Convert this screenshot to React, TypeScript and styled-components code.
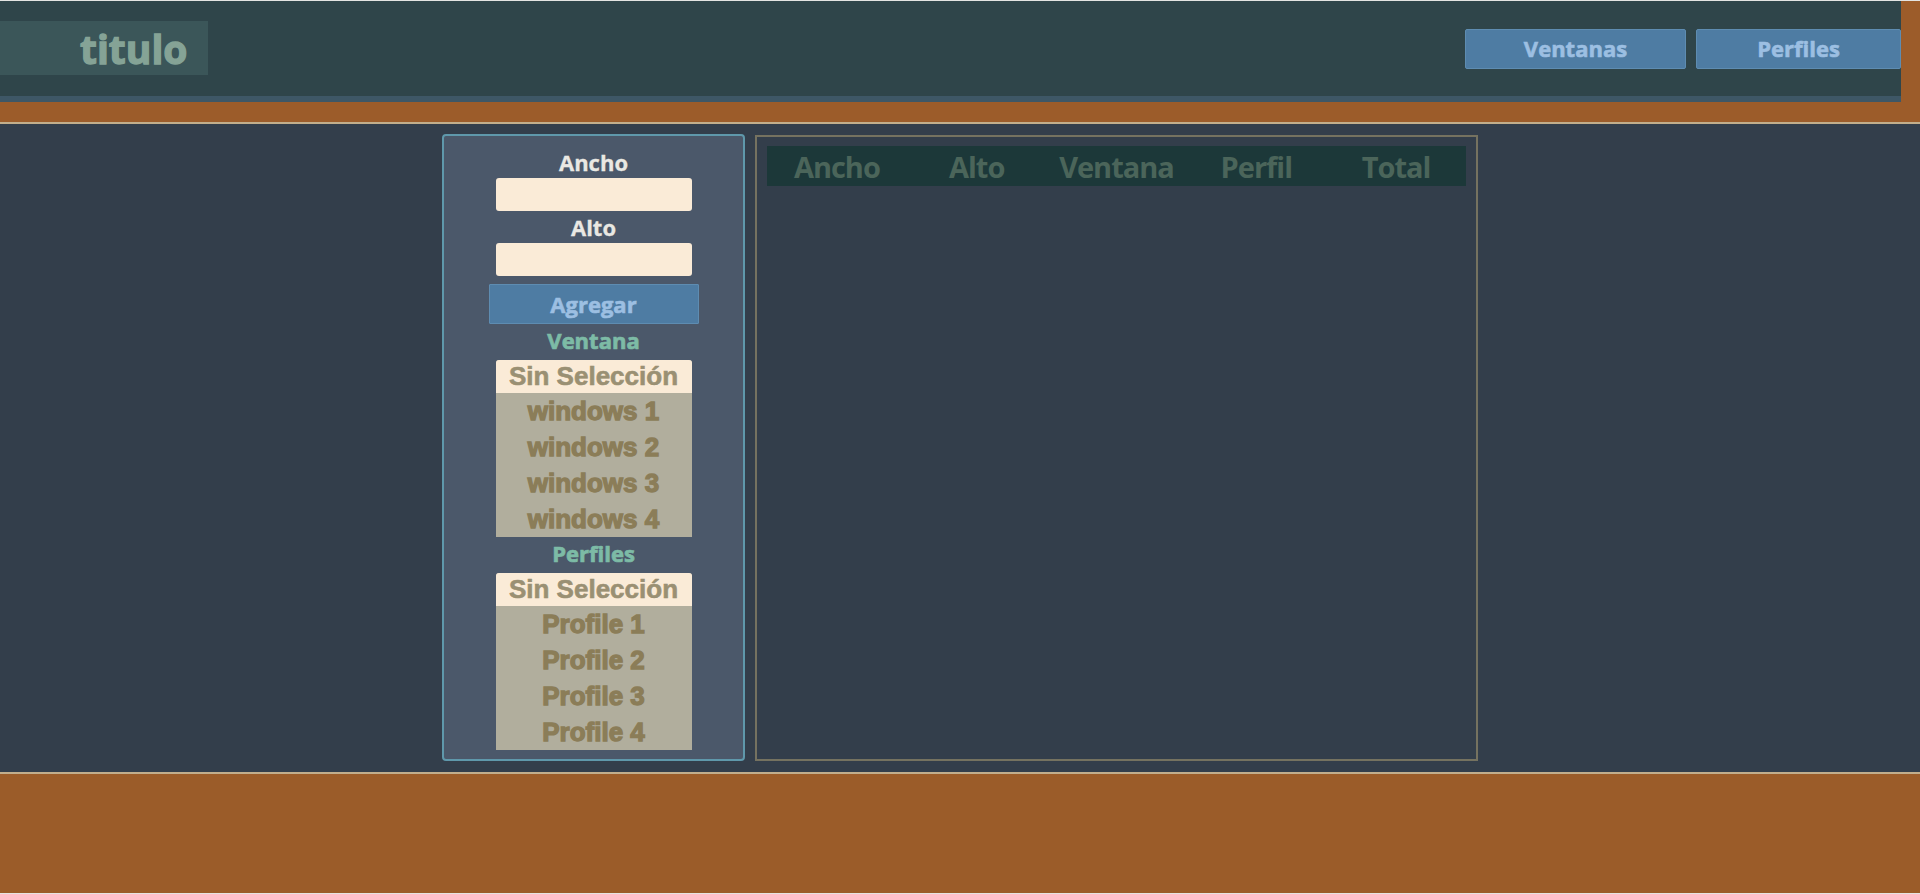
import React from 'react';
import styled, { createGlobalStyle } from 'styled-components';

const GlobalStyle = createGlobalStyle`
  html, body {
    margin: 0;
    padding: 0;
  }
  body {
    padding-top: 1px;
    background: #e4e4e2;
    font-family: "Open Sans", "Liberation Sans", sans-serif;
  }
`;

// header area: the dark bar sits inside an orange frame
const HeaderFrame = styled.div`
  background: #9c5c2a;
  padding: 0 19px 20px 0;
  border-bottom: 2px solid #c2ae8c;
`;

const HeaderBar = styled.header`
  height: 95px;
  background: #2f454a;
  border-bottom: 6px solid #3e5766;
  display: flex;
  align-items: center;
  justify-content: space-between;
  overflow: hidden;
`;

const TitleBox = styled.div`
  height: 54px;
  margin-top: -1px;
  padding: 0 21px 0 80px;
  background: #3b5659;
  display: flex;
  align-items: center;
`;

const Title = styled.h1`
  margin: 0;
  font-family: "Open Sans", sans-serif;
  font-size: 39px;
  font-weight: 700;
  color: #85a396;
  line-height: 1;
  -webkit-text-stroke: 1.3px currentColor;
`;

const Nav = styled.nav`
  display: flex;
  gap: 10px;
  margin-top: 1px;
`;

const NavButton = styled.button<{ $w: number }>`
  width: ${(p) => p.$w}px;
  height: 40px;
  background: #4e7ca3;
  border: 1px solid #5e8cb1;
  border-radius: 2px;
  color: #9cbfe2;
  font-family: "Open Sans", sans-serif;
  font-size: 22px;
  font-weight: 700;
  padding: 0 0 2px;
  cursor: pointer;
  -webkit-text-stroke: 0.6px currentColor;
`;

const Main = styled.main`
  height: 648px;
  background: #333e4b;
  display: flex;
  justify-content: center;
  align-items: flex-start;
  gap: 10px;
  padding-top: 10px;
  box-sizing: border-box;
`;

const Sidebar = styled.aside`
  width: 303px;
  height: 627px;
  box-sizing: border-box;
  background: #4b586a;
  border: 2px solid #5f98ab;
  border-radius: 4px;
  padding-top: 10px;
  display: flex;
  flex-direction: column;
  align-items: center;
`;

const FieldLabel = styled.label`
  font-family: "Open Sans", sans-serif;
  font-size: 22px;
  font-weight: 700;
  line-height: 32px;
  color: #e9e8e3;
  -webkit-text-stroke: 0.3px currentColor;
`;

const TextInput = styled.input`
  width: 196px;
  height: 33px;
  box-sizing: border-box;
  border: none;
  border-radius: 3px;
  background: #faebd7;
  outline: none;
`;

const AddButton = styled.button`
  margin-top: 8px;
  width: 210px;
  height: 40px;
  background: #4e7ca3;
  border: 1px solid #5e8cb1;
  border-radius: 1px;
  color: #9cbfe2;
  font-family: "Open Sans", sans-serif;
  font-size: 22px;
  font-weight: 700;
  padding: 0;
  -webkit-text-stroke: 0.6px currentColor;
`;

const GroupLabel = styled.div`
  margin: 1px 0 5px;
  font-family: "Open Sans", sans-serif;
  font-size: 22px;
  font-weight: 700;
  line-height: 30px;
  color: #7dbba6;
  -webkit-text-stroke: 0.7px currentColor;
`;

const OptionList = styled.ul`
  list-style: none;
  margin: 0;
  padding: 0;
  width: 196px;
  border-radius: 3px 3px 0 0;
  overflow: hidden;
  background: #b1ae9d;
`;

const OptionItem = styled.li<{ $selected?: boolean }>`
  height: ${(p) => (p.$selected ? 33 : 36)}px;
  display: flex;
  align-items: center;
  justify-content: center;
  font-family: "Liberation Sans", Arial, sans-serif;
  font-size: 26px;
  font-weight: 700;
  color: ${(p) => (p.$selected ? '#9a9073' : '#8b7d58')};
  background: ${(p) => (p.$selected ? '#faebd7' : 'transparent')};
  -webkit-text-stroke: ${(p) => (p.$selected ? '0.6px' : '1.3px')} currentColor;
`;

const TablePanel = styled.section`
  width: 723px;
  height: 626px;
  margin-top: 1px;
  box-sizing: border-box;
  border: 2px solid #757260;
  padding: 9px 10px;
`;

const DataTable = styled.table`
  width: 100%;
  border-collapse: collapse;
  table-layout: fixed;
`;

const HeadCell = styled.th`
  height: 40px;
  padding: 0;
  background: #1c3839;
  color: #4b655a;
  font-family: "Open Sans", sans-serif;
  font-size: 29px;
  font-weight: 700;
  text-align: center;
  letter-spacing: -1px;
`;

const Footer = styled.footer`
  height: 119px;
  background: #9b5c29;
  border-top: 2px solid #c2ae8c;
`;

const ventanas = ['windows 1', 'windows 2', 'windows 3', 'windows 4'];
const perfiles = ['Profile 1', 'Profile 2', 'Profile 3', 'Profile 4'];
const columnas = ['Ancho', 'Alto', 'Ventana', 'Perfil', 'Total'];

export default function App() {
  return (
    <>
      <GlobalStyle />
      <HeaderFrame>
        <HeaderBar>
          <TitleBox>
            <Title>titulo</Title>
          </TitleBox>
          <Nav>
            <NavButton $w={221}>Ventanas</NavButton>
            <NavButton $w={205}>Perfiles</NavButton>
          </Nav>
        </HeaderBar>
      </HeaderFrame>
      <Main>
        <Sidebar>
          <FieldLabel>Ancho</FieldLabel>
          <TextInput type="text" />
          <FieldLabel>Alto</FieldLabel>
          <TextInput type="text" />
          <AddButton>Agregar</AddButton>
          <GroupLabel>Ventana</GroupLabel>
          <OptionList>
            <OptionItem $selected>Sin Selección</OptionItem>
            {ventanas.map((v) => (
              <OptionItem key={v}>{v}</OptionItem>
            ))}
          </OptionList>
          <GroupLabel>Perfiles</GroupLabel>
          <OptionList>
            <OptionItem $selected>Sin Selección</OptionItem>
            {perfiles.map((p) => (
              <OptionItem key={p}>{p}</OptionItem>
            ))}
          </OptionList>
        </Sidebar>
        <TablePanel>
          <DataTable>
            <thead>
              <tr>
                {columnas.map((c) => (
                  <HeadCell key={c}>{c}</HeadCell>
                ))}
              </tr>
            </thead>
          </DataTable>
        </TablePanel>
      </Main>
      <Footer />
    </>
  );
}
